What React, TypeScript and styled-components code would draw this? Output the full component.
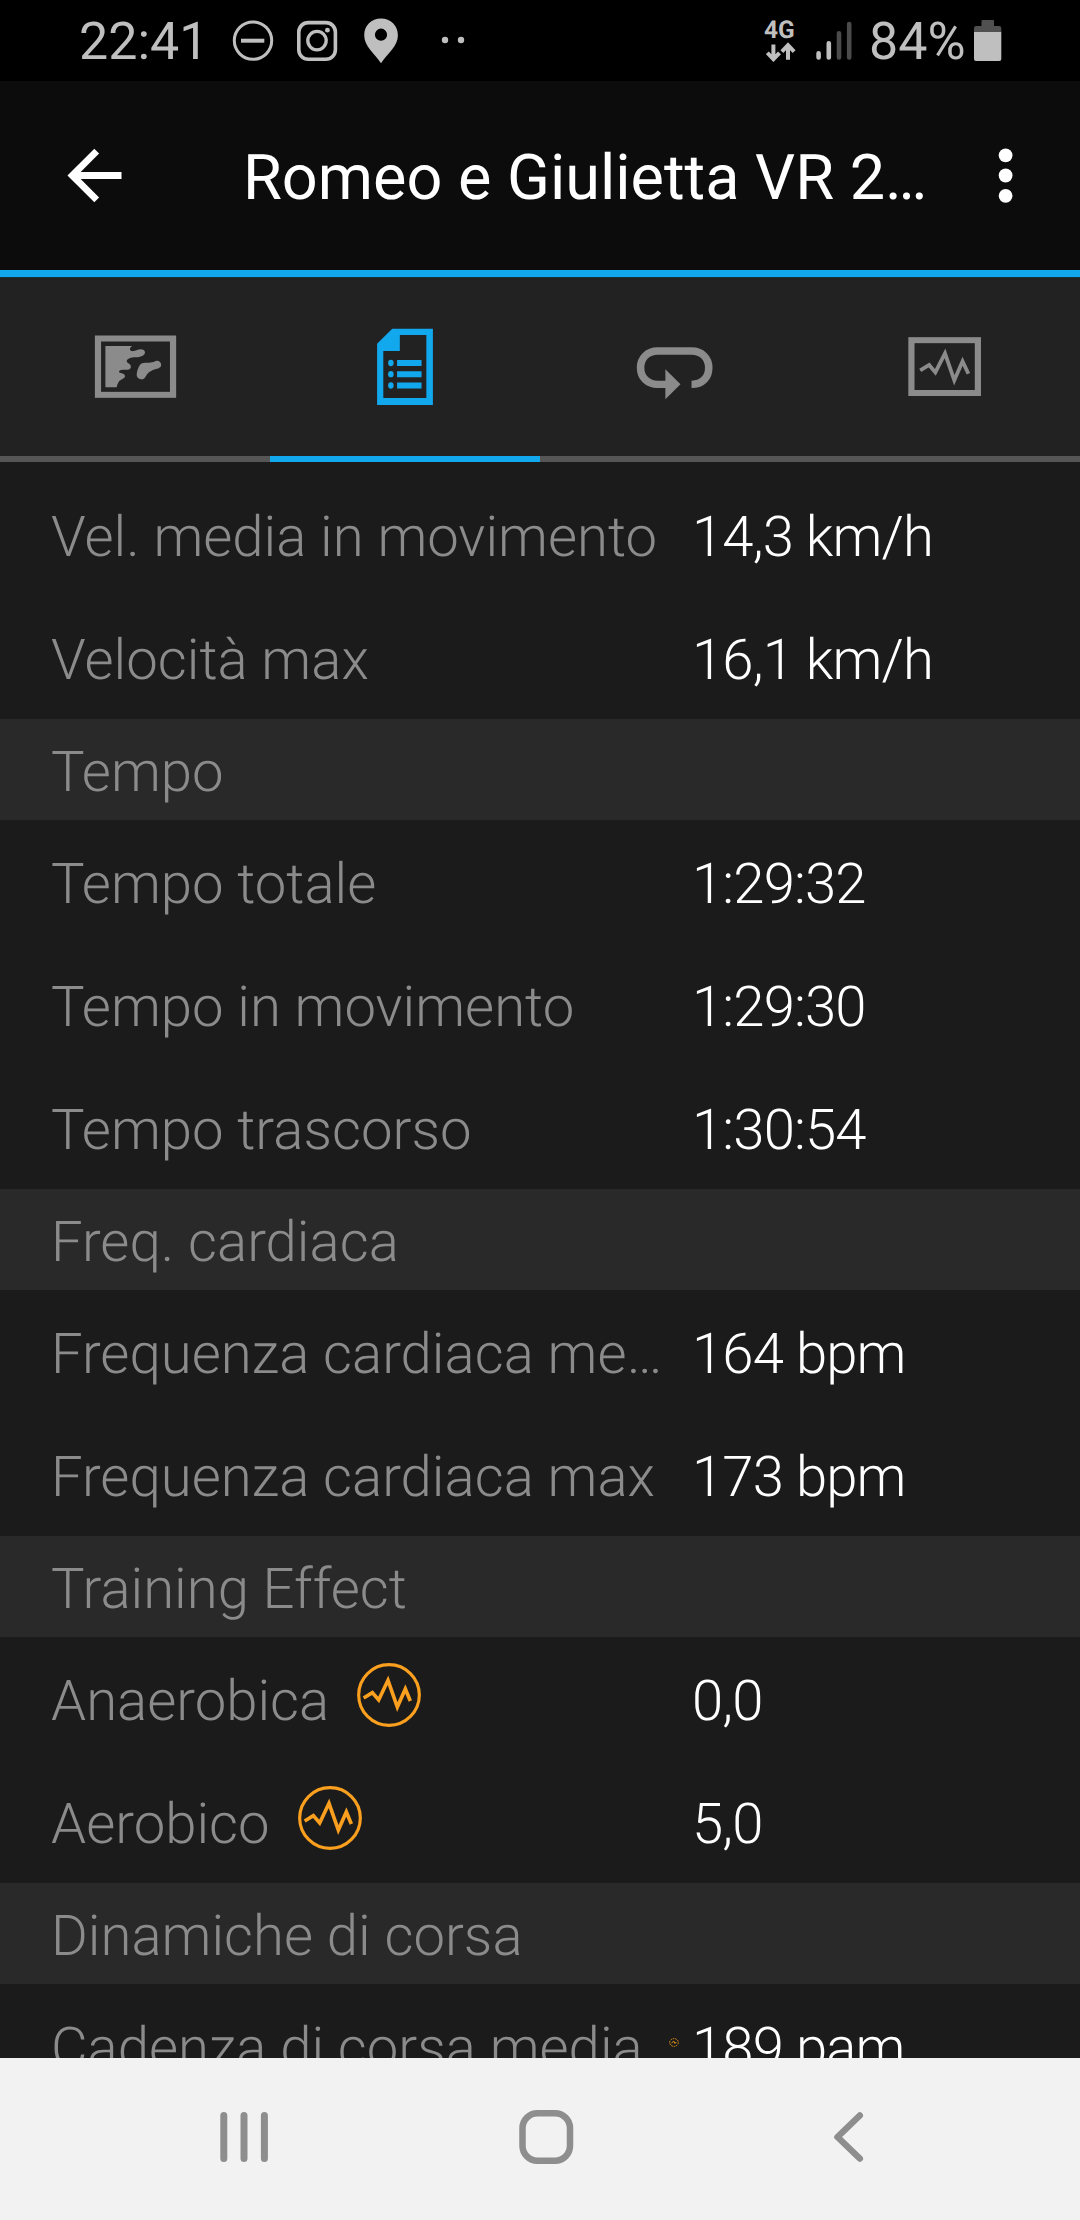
import React from "react";
import styled, { createGlobalStyle } from "styled-components";

const BLUE = "#12a8ee";
const GREY = "#8b8b8b";
const STATUS = "#bfbfbf";
const ORANGE = "#fa9f1e";

const GlobalStyle = createGlobalStyle`
  * { box-sizing: border-box; }
  body { margin: 0; background: #1b1b1b; }
  svg { display: block; flex: none; }
`;

const Screen = styled.div`
  width: 1080px;
  height: 2220px;
  display: flex;
  flex-direction: column;
  overflow: hidden;
  background: #1b1b1b;
  font-family: Roboto, "Noto Sans", sans-serif;
  text-rendering: geometricPrecision;
`;

const StatusBar = styled.div`
  height: 81px;
  flex: none;
  display: flex;
  justify-content: space-between;
  padding: 0 78px 0 79px;
  background: #000;
  color: ${STATUS};
`;

const StatusGroup = styled.div`
  display: flex;
  align-items: flex-start;
`;

const StatusText = styled.span<{ $width: number }>`
  width: ${(p) => p.$width}px;
  font-size: 52px;
  line-height: 60px;
  padding-top: 12px;
  white-space: nowrap;
`;

const Network = styled.div`
  width: 36px;
  margin-right: 14px;
  padding-top: 17px;
  display: flex;
  flex-direction: column;
  font-size: 24.5px;
  line-height: 25px;
  font-weight: 700;

  svg { margin-left: 2px; }
`;

const Header = styled.header`
  height: 196px;
  flex: none;
  display: flex;
  align-items: flex-start;
  background: #0c0c0c;
  border-bottom: 7px solid ${BLUE};
`;

const Title = styled.h1`
  width: 717px;
  margin: 0;
  padding-top: 61px;
  font-size: 63px;
  line-height: 74px;
  font-weight: 400;
  color: #fff;
  white-space: nowrap;
`;

const Tabs = styled.nav`
  height: 185px;
  flex: none;
  display: grid;
  grid-template-columns: repeat(4, 270px);
  background: #222;
  border-top: 1px solid #17303d;
`;

const Tab = styled.div<{ $active?: boolean }>`
  color: ${(p) => (p.$active ? BLUE : GREY)};
  border-bottom: 6px solid ${(p) => (p.$active ? BLUE : "#565656")};
`;

const List = styled.main`
  flex: 1;
  min-height: 0;
  overflow: hidden;
  padding-top: 11px;
`;

const Row = styled.div`
  height: 123px;
  display: flex;
  padding-left: 51px;
  font-size: 56.25px;
  line-height: 66px;
  font-weight: 300;
`;

const LabelCell = styled.div`
  width: 641px;
  display: flex;
  align-items: flex-start;
`;

const Label = styled.span`
  padding-top: 31px;
  color: ${GREY};
  white-space: nowrap;
`;

const Value = styled.span`
  padding-top: 31px;
  color: #fff;
  white-space: nowrap;
  letter-spacing: -0.85px;
`;

const Section = styled.div`
  height: 101px;
  padding: 20px 0 0 51px;
  background: #292929;
  color: ${GREY};
  font-size: 56.25px;
  line-height: 66px;
  font-weight: 300;
`;

const BadgeSlot = styled.div<{ $gap: number; $top: number }>`
  padding: ${(p) => p.$top}px 0 0 ${(p) => p.$gap}px;
`;

const NavBar = styled.footer`
  height: 162px;
  flex: none;
  display: flex;
  background: #f2f2f2;
`;

const StatusIcons = () => (
  <svg width="260" height="81" viewBox="220 0 260 81" fill="none" stroke={STATUS}>
    <circle cx="253" cy="40.6" r="18.7" strokeWidth="3" />
    <path d="M241 40.7H264.3" strokeWidth="4" />
    <rect x="298.8" y="22.6" width="36.6" height="36.6" rx="9.5" strokeWidth="3.6" />
    <circle cx="317" cy="40.6" r="9.2" strokeWidth="3.3" />
    <circle cx="327.4" cy="30.2" r="2.4" fill={STATUS} stroke="none" />
    <path
      fill={STATUS}
      stroke="none"
      fillRule="evenodd"
      d="M381 18.5C371.3 18.5 364.2 25.8 364.2 35.2C364.2 46 374 53 381 63.2C388 53 397.9 46 397.9 35.2C397.9 25.8 390.7 18.5 381 18.5ZM381 28.6A6.1 6.1 0 1 1 381 40.8A6.1 6.1 0 1 1 381 28.6Z"
    />
    <circle cx="445" cy="40" r="3.2" fill={STATUS} stroke="none" />
    <circle cx="461" cy="40" r="3.2" fill={STATUS} stroke="none" />
  </svg>
);

const DataArrows = () => (
  <svg width="30" height="20" viewBox="766 42 30 20" fill="none" stroke={STATUS} strokeWidth="4">
    <path d="M773.4 44.5V59M767.3 52.8L773.4 59.2L779.5 52.8" />
    <path d="M788 59.8V45.5M781.9 51.6L788 45.2L794.1 51.6" />
  </svg>
);

const Signal = () => (
  <svg width="55" height="81" viewBox="814 0 55 81" strokeWidth="4.6" strokeLinecap="round">
    <path stroke={STATUS} d="M818.6 53.3V57.5M828.8 43.3V57.5" />
    <path stroke="#4b4b4b" d="M839 33.3V57.5M849.2 24V57.5" />
  </svg>
);

const Battery = () => (
  <svg width="28" height="81" viewBox="974 0 28 81">
    <path fill="#505050" d="M981.5 21Q981.5 20 982.5 20H993Q994 20 994 21V26H999Q1001.3 26 1001.3 28.3V32H974V28.3Q974 26 976.3 26H981.5Z" />
    <path fill={STATUS} d="M974 32H1001.3V59Q1001.3 61 999.3 61H976Q974 61 974 59Z" />
  </svg>
);

const BackArrow = () => (
  <svg width="243" height="189" viewBox="0 81 243 189" fill="none" stroke="#fff" strokeWidth="6.8">
    <path d="M121.5 175.5H72M96.7 151.2L72.3 175.5L96.7 199.8" />
  </svg>
);

const MoreDots = () => (
  <svg width="120" height="189" viewBox="960 81 120 189" fill="#fff">
    <circle cx="1005.6" cy="155.3" r="6.9" />
    <circle cx="1005.6" cy="175.5" r="6.9" />
    <circle cx="1005.6" cy="195.8" r="6.9" />
  </svg>
);

const TabIcon = ({ x = 0, children }: { x?: number; children: React.ReactNode }) => (
  <svg width="270" height="178" viewBox={`${x} 24 784 534`} preserveAspectRatio="none" fill="none">
    {children}
  </svg>
);

const MapIcon = () => (
  <TabIcon>
    <rect x="284.5" y="205.5" width="218" height="169" stroke="currentColor" strokeWidth="18" />
    <path
      fill="currentColor"
      d="M306 228H384C378 232 376 236 378 240C382 246 390 243 398 240C408 236 421 238 421 247C421 257 408 262 394 262C380 262 370 266 368 273C368 280 380 280 380 290C380 299 370 300 358 299C348 299 344 303 346 307C350 311 363 310 363 319C363 327 350 326 344 337Q340 344 339 352H306Z"
    />
    <path
      fill="currentColor"
      d="M412 280C424 276 440 281 452 273C460 270 468 276 468 284C468 295 456 295 444 300C424 309 426 319 418 326C409 331 397 325 397 314C398 300 404 285 412 280Z"
    />
  </TabIcon>
);

const DetailsIcon = () => (
  <TabIcon x={784}>
    <path
      fill="currentColor"
      fillRule="evenodd"
      d="M1139 176H1257V405H1095V221ZM1161 195V243H1113V384H1238V195Z"
    />
    <path stroke="currentColor" strokeWidth="18" d="M1153 279H1224M1153 312.5H1224M1153 346.5H1224" />
    <g fill="currentColor">
      <ellipse cx="1135" cy="279" rx="8" ry="9.5" />
      <ellipse cx="1135" cy="312.5" rx="8" ry="9.5" />
      <ellipse cx="1135" cy="346.5" rx="8" ry="9.5" />
    </g>
  </TabIcon>
);

const LapIcon = () => (
  <TabIcon>
    <path
      stroke="currentColor"
      strokeWidth="22"
      d="M440 343C472 343 490 322 490 293C490 264 470 243 440 243H342C312 243 292 264 292 293C292 322 312 343 342 343H372"
    />
    <path fill="currentColor" d="M364 298L408 343L364 388Z" />
  </TabIcon>
);

const ChartIcon = () => (
  <TabIcon x={784}>
    <rect x="1078.5" y="210.5" width="193" height="158.5" stroke="currentColor" strokeWidth="18" />
    <path
      stroke="currentColor"
      strokeWidth="11"
      strokeMiterlimit="10"
      d="M1104 301L1130 285L1148 307L1176 250L1203 331L1227 274L1244 311"
    />
  </TabIcon>
);

const PulseBadge = () => (
  <svg width="64" height="64" viewBox="0 0 192 192" fill="none" stroke={ORANGE}>
    <circle cx="96" cy="96" r="91" strokeWidth="9.5" />
    <path strokeWidth="11" strokeMiterlimit="10" d="M20 105L46 89L65 111L93 52L121 132L145 78L160 114" />
  </svg>
);

const TinyPulseBadge = () => (
  <svg width="10" height="9" viewBox="0 0 10 9" fill="none" stroke={ORANGE}>
    <ellipse cx="5" cy="4.5" rx="4.3" ry="3.9" strokeWidth="0.9" strokeDasharray="1.6 0.9" />
    <path strokeWidth="0.9" d="M2.5 5L4.8 3.2L6 5.5L7.3 4" />
  </svg>
);

const NavIcons = () => (
  <svg width="1080" height="162" viewBox="0 2058 1080 162" fill="none" stroke="#8e8e8e" strokeLinecap="round">
    <path strokeWidth="7" d="M223.8 2115.5V2158.5M244 2115.5V2158.5M264.4 2115.5V2158.5" />
    <rect x="522.5" y="2113.2" width="47.5" height="47.6" rx="15" strokeWidth="6.5" />
    <path strokeWidth="6.5" strokeLinejoin="round" d="M859.8 2115.5L837.5 2137L859.8 2158.5" />
  </svg>
);

type RowData = { label: string; value: string; badge?: "large" | "small" };

const DataRow = ({ label, value, badge }: RowData) => (
  <Row>
    <LabelCell>
      <Label>{label}</Label>
      {badge === "large" && (
        <BadgeSlot $gap={28} $top={26}>
          <PulseBadge />
        </BadgeSlot>
      )}
      {badge === "small" && (
        <BadgeSlot $gap={26} $top={53.5}>
          <TinyPulseBadge />
        </BadgeSlot>
      )}
    </LabelCell>
    <Value>{value}</Value>
  </Row>
);

const groups: { title?: string; rows: RowData[] }[] = [
  {
    rows: [
      { label: "Vel. media in movimento", value: "14,3 km/h" },
      { label: "Velocità max", value: "16,1 km/h" },
    ],
  },
  {
    title: "Tempo",
    rows: [
      { label: "Tempo totale", value: "1:29:32" },
      { label: "Tempo in movimento", value: "1:29:30" },
      { label: "Tempo trascorso", value: "1:30:54" },
    ],
  },
  {
    title: "Freq. cardiaca",
    rows: [
      { label: "Frequenza cardiaca me…", value: "164 bpm" },
      { label: "Frequenza cardiaca max", value: "173 bpm" },
    ],
  },
  {
    title: "Training Effect",
    rows: [
      { label: "Anaerobica", value: "0,0", badge: "large" },
      { label: "Aerobico", value: "5,0", badge: "large" },
    ],
  },
  {
    title: "Dinamiche di corsa",
    rows: [{ label: "Cadenza di corsa media", value: "189 pam", badge: "small" }],
  },
];

export default function App() {
  return (
    <Screen>
      <GlobalStyle />
      <StatusBar>
        <StatusGroup>
          <StatusText $width={141}>22:41</StatusText>
          <StatusIcons />
        </StatusGroup>
        <StatusGroup>
          <Network>
            4G
            <DataArrows />
          </Network>
          <Signal />
          <StatusText $width={105}>84%</StatusText>
          <Battery />
        </StatusGroup>
      </StatusBar>
      <Header>
        <BackArrow />
        <Title>Romeo e Giulietta VR 2…</Title>
        <MoreDots />
      </Header>
      <Tabs>
        <Tab><MapIcon /></Tab>
        <Tab $active><DetailsIcon /></Tab>
        <Tab><LapIcon /></Tab>
        <Tab><ChartIcon /></Tab>
      </Tabs>
      <List>
        {groups.map((group, i) => (
          <React.Fragment key={i}>
            {group.title && <Section>{group.title}</Section>}
            {group.rows.map((row) => (
              <DataRow key={row.label} {...row} />
            ))}
          </React.Fragment>
        ))}
      </List>
      <NavBar>
        <NavIcons />
      </NavBar>
    </Screen>
  );
}
